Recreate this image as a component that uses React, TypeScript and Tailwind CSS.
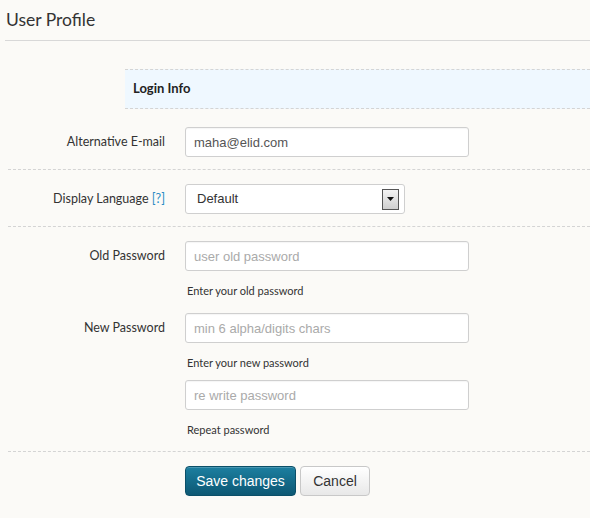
const labelCls = "w-[165px] shrink-0 text-right text-[12.5px] text-[#333]";
const inputCls =
  "h-[30px] rounded-[3px] border border-[#cfcfcf] bg-white px-[8px] text-[13px] text-[#555] placeholder:text-[#aaa] outline-none font-['Liberation_Sans',Arial,sans-serif] shadow-[inset_0_1px_1px_rgba(0,0,0,0.04)]";

function Help({ children }: { children: string }) {
  return <p className="ml-[187px] mt-[13px] text-[11px] leading-[14px] text-[#333]">{children}</p>;
}

export default function App() {
  return (
    <div className="min-h-[518px] w-[590px] bg-[#fbfaf7] font-['Lato','Open_Sans',sans-serif] text-[#333]">
      {/* Header */}
      <div className="ml-[5px] h-[41px] border-b border-[#d8d8d8] pl-[1px] pt-[8px]">
        <h1 className="text-[17.5px] leading-[24px] text-[#333]">User Profile</h1>
      </div>

      {/* Section heading */}
      <div className="ml-[125px] mt-[28px] flex h-[40px] items-center border-y border-dashed border-[#d4d4d4] bg-[#eff8ff] pl-[8px]">
        <span className="text-[13px] font-bold text-[#222]">Login Info</span>
      </div>

      {/* Email */}
      <div className="ml-[8px] border-b border-dashed border-[#d4d4d4] pt-[18px] pb-[12px]">
        <div className="-ml-[8px] flex items-center">
          <label className={labelCls}>Alternative E-mail</label>
          <input className={`${inputCls} ml-[20px] w-[284px]`} defaultValue="maha@elid.com" />
        </div>
      </div>

      {/* Language */}
      <div className="ml-[8px] border-b border-dashed border-[#d4d4d4] pt-[14px] pb-[12px]">
        <div className="-ml-[8px] flex items-center">
          <label className={labelCls}>
            Display Language <span className="text-[#2a8cc4]">[?]</span>
          </label>
          <div className="ml-[20px] flex h-[30px] w-[220px] items-center justify-between rounded-[3px] border border-[#cfcfcf] bg-white pl-[11px] pr-[5px] font-['Liberation_Sans',Arial,sans-serif] text-[13px] text-[#333]">
            <span>Default</span>
            <span className="flex h-[21px] w-[17px] items-center justify-center border border-[#555] bg-gradient-to-b from-[#f4f4f4] to-[#cfcfcf]">
              <svg width="7" height="4" viewBox="0 0 7 4"><path d="M0 0h7L3.5 4z" fill="#111" /></svg>
            </span>
          </div>
        </div>
      </div>

      {/* Passwords */}
      <div className="ml-[8px] border-b border-dashed border-[#d4d4d4] pt-[14px] pb-[14px]">
        <div className="-ml-[8px]">
          <div className="flex items-center">
            <label className={labelCls}>Old Password</label>
            <input type="password" className={`${inputCls} ml-[20px] w-[284px]`} placeholder="user old password" />
          </div>
          <Help>Enter your old password</Help>
          <div className="mt-[15px] flex items-center">
            <label className={labelCls}>New Password</label>
            <input type="password" className={`${inputCls} ml-[20px] w-[284px]`} placeholder="min 6 alpha/digits chars" />
          </div>
          <Help>Enter your new password</Help>
          <div className="mt-[10px] flex items-center">
            <input type="password" className={`${inputCls} ml-[185px] w-[284px]`} placeholder="re write password" />
          </div>
          <Help>Repeat password</Help>
        </div>
      </div>

      {/* Actions */}
      <div className="ml-[185px] flex gap-[4px] pt-[14px] font-['Liberation_Sans',Arial,sans-serif]">
        <button className="h-[30px] w-[111px] rounded-[4px] border border-[#0b4f68] bg-gradient-to-b from-[#1c7fa0] to-[#0d5874] text-[14px] text-white shadow-[inset_0_1px_0_rgba(255,255,255,0.2)]">
          Save changes
        </button>
        <button className="h-[30px] w-[70px] rounded-[4px] border border-[#c8c8c8] bg-gradient-to-b from-[#ffffff] to-[#e8e8e8] text-[14px] text-[#333]">
          Cancel
        </button>
      </div>
    </div>
  );
}
